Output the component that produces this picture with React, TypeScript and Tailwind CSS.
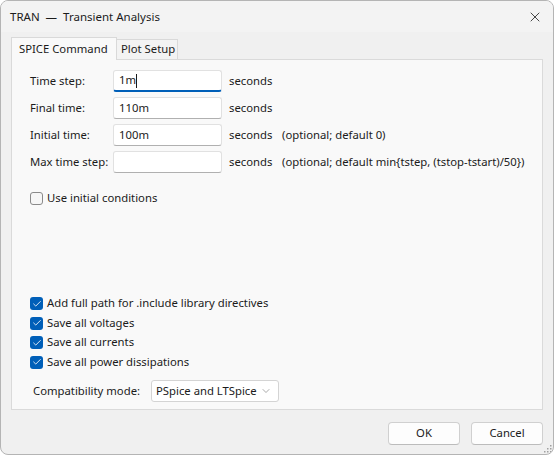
import { Check, ChevronDown, X } from 'lucide-react'

const font = { fontFamily: '"Noto Sans", "Segoe UI", sans-serif' }

export default function App() {
  return (
    <div className="w-[554px] h-[455px] bg-white" style={font}>
      <div className="w-[554px] h-[455px] flex flex-col bg-[#f0f0f0] border border-[#b4b4b4] rounded-[8px] overflow-hidden text-[11.3px] text-[#1b1b1b] whitespace-nowrap">
        <TitleBar />
        <Tabs />
        <Panel />
        <Footer />
      </div>
    </div>
  )
}

function TitleBar() {
  return (
    <div className="h-[31px] flex items-center justify-between bg-[#f3f3f3] pl-[9px] pr-[10px]">
      <span className="text-[11.5px] pt-[1px]">TRAN &nbsp;—&nbsp; Transient Analysis</span>
      <X size={16} strokeWidth={1.2} className="text-[#1b1b1b]" />
    </div>
  )
}

function Tabs() {
  return (
    <div className="h-[27px] flex items-end pl-[10px]">
      <div className="h-[23px] w-[106px] pl-[7px] flex items-center bg-[#f9f9f9] border border-b-0 border-[#d9d9d9] relative z-10 -mb-[1px]">
        SPICE Command
      </div>
      <div className="h-[20px] w-[61px] pl-[4px] flex items-center bg-[#f3f3f3] border border-l-0 border-b-0 border-[#d9d9d9]">
        Plot Setup
      </div>
    </div>
  )
}

function Panel() {
  const rows = [
    { label: 'Time step:', value: '1m', focus: true, note: '' },
    { label: 'Final time:', value: '110m', focus: false, note: '' },
    { label: 'Initial time:', value: '100m', focus: false, note: '(optional; default 0)' },
    { label: 'Max time step:', value: '', focus: false, note: '(optional; default min{tstep, (tstop-tstart)/50})' },
  ]
  const checks = [
    'Add full path for .include library directives',
    'Save all voltages',
    'Save all currents',
    'Save all power dissipations',
  ]
  return (
    <div className="mx-[10px] h-[351px] bg-[#f9f9f9] border border-[#dadada] flex flex-col pl-[18px] pt-[10px] pb-[7px]">
      <div className="flex flex-col gap-[5px]">
        {rows.map((r) => (
          <div key={r.label} className="h-[22px] flex items-center">
            <span className="w-[83px]">{r.label}</span>
            <TextBox value={r.value} focus={r.focus} />
            <span className="ml-[7px] w-[53px]">seconds</span>
            {r.note && <span>{r.note}</span>}
          </div>
        ))}
      </div>
      <div className="mt-[17px]">
        <CheckRow label="Use initial conditions" checked={false} />
      </div>
      <div className="flex-1" />
      <div className="flex flex-col">
        {checks.map((c) => (
          <div key={c} className="h-[19.5px] flex items-center">
            <CheckRow label={c} checked />
          </div>
        ))}
      </div>
      <div className="mt-[8px] h-[22px] flex items-center">
        <span className="ml-[3px] w-[118px]">Compatibility mode:</span>
        <div className="w-[128px] h-[22px] bg-white border border-[#d4d4d4] rounded-[3px] flex items-center justify-between pl-[4px] pr-[6px]">
          <span>PSpice and LTSpice</span>
          <ChevronDown size={12} strokeWidth={1.2} className="text-[#707070]" />
        </div>
      </div>
    </div>
  )
}

function TextBox({ value, focus }: { value: string; focus: boolean }) {
  return (
    <div
      className={
        'w-[109px] h-[22px] bg-white border border-[#e1e1e1] rounded-[3px] flex items-center pl-[5px] ' +
        (focus ? 'border-b-2 border-b-[#005fb8]' : 'border-b-[#b0b0b0]')
      }
    >
      <span>{value}</span>
      {focus && <span className="w-[1px] h-[14px] bg-[#1b1b1b]" />}
    </div>
  )
}

function CheckRow({ label, checked }: { label: string; checked: boolean }) {
  return (
    <div className="flex items-center gap-[4px]">
      {checked ? (
        <span className="w-[13px] h-[13px] rounded-[3px] bg-[#005fb8] flex items-center justify-center">
          <Check size={10} strokeWidth={2} className="text-white" />
        </span>
      ) : (
        <span className="w-[13px] h-[13px] rounded-[3px] border border-[#8a8a8a] bg-[#f6f6f6]" />
      )}
      <span>{label}</span>
    </div>
  )
}

function Footer() {
  return (
    <div className="flex-1 flex items-center justify-end gap-[11px] pr-[10px] pt-[2px] relative">
      <button className="w-[72px] h-[23px] bg-[#fdfdfd] border border-[#d0d0d0] border-b-[#bcbcbc] rounded-[4px]">
        OK
      </button>
      <button className="w-[72px] h-[23px] bg-[#fdfdfd] border border-[#d0d0d0] border-b-[#bcbcbc] rounded-[4px]">
        Cancel
      </button>
      <svg className="absolute right-[1px] bottom-[1px]" width="8" height="8" viewBox="0 0 8 8">
        <rect x="6" y="0" width="1.5" height="1.5" fill="#a0a0a0" />
        <rect x="3" y="3" width="1.5" height="1.5" fill="#a0a0a0" />
        <rect x="6" y="3" width="1.5" height="1.5" fill="#a0a0a0" />
        <rect x="0" y="6" width="1.5" height="1.5" fill="#a0a0a0" />
        <rect x="3" y="6" width="1.5" height="1.5" fill="#a0a0a0" />
        <rect x="6" y="6" width="1.5" height="1.5" fill="#a0a0a0" />
      </svg>
    </div>
  )
}
